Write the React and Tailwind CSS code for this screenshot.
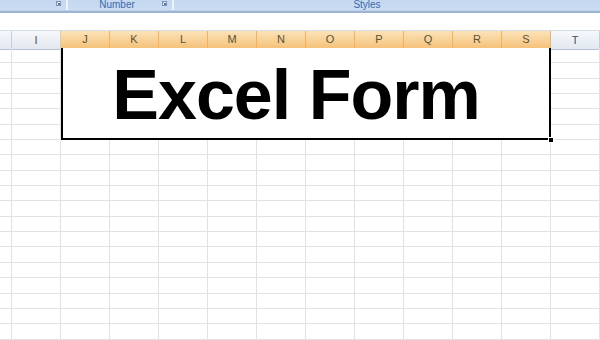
import React from "react";

const COLS = ["", "I", "J", "K", "L", "M", "N", "O", "P", "Q", "R", "S", "T"];
const SELECTED = ["J", "K", "L", "M", "N", "O", "P", "Q", "R", "S"];
const ROWS = 19;

function Launcher() {
  return (
    <svg width="5" height="5" viewBox="0 0 5 5" className="shrink-0">
      <rect x="0.5" y="0.5" width="4" height="4" fill="#e9f0f9" stroke="#7d95b8" strokeWidth="1" />
      <path d="M1.5 1.5 L3.5 3.5 M3.5 2 V3.5 H2" stroke="#3a5a8a" strokeWidth="0.8" fill="none" />
    </svg>
  );
}

export default function App() {
  return (
    <div className="w-[600px] h-[340px] overflow-hidden bg-white flex flex-col" style={{ fontFamily: '"Liberation Sans", Arial, sans-serif' }}>
      {/* ribbon bottom edge */}
      <div className="h-[10px] flex bg-[#dbe6f4]">
        <div className="w-[66px] flex justify-end items-start pt-[1px] pr-[5px] bg-gradient-to-b from-[#c4d8f0] to-[#c9dcf2] rounded-br-[2px]">
          <Launcher />
        </div>
        <div className="w-[2px] bg-[#eef3fa]" />
        <div className="w-[104px] flex items-center bg-gradient-to-b from-[#c4d8f0] to-[#c9dcf2] rounded-b-[2px]">
          <span className="flex-1 text-center text-[10px] leading-none text-[#3f68a8] pl-[4px]">Number</span>
          <div className="pr-[5px] self-start pt-[1px]"><Launcher /></div>
        </div>
        <div className="w-[2px] bg-[#eef3fa]" />
        <div className="flex-1 flex items-center justify-center bg-gradient-to-b from-[#c4d8f0] to-[#c9dcf2] rounded-bl-[2px]">
          <span className="text-[10px] leading-none text-[#3f68a8] mr-[40px]">Styles</span>
        </div>
      </div>
      <div className="h-[1px] bg-[#c0d2ea]" />
      <div className="h-[2px] bg-[#9db4d4]" />
      <div className="h-[17px] bg-white" />
      <div className="h-[1px] bg-[#d6dde7]" />

      {/* column headers */}
      <div className="grid grid-cols-[12px_repeat(12,49px)] h-[17px]">
        {COLS.map((c, i) => {
          const sel = SELECTED.includes(c);
          return (
            <div
              key={i}
              className={
                sel
                  ? "flex items-center justify-center text-[11px] text-[#5a5132] bg-gradient-to-b from-[#fbe3b8] to-[#f5c27a] border-r border-[#f2b15f] border-b-2 border-b-[#f29a3a]"
                  : "flex items-center justify-center text-[11px] text-[#4a4f58] bg-gradient-to-b from-[#f6f8fb] to-[#e2e8f0] border-r border-[#c5cedb] border-b border-b-[#b6c1d1]"
              }
            >
              {c}
            </div>
          );
        })}
      </div>

      {/* sheet */}
      <div className="flex-1 grid grid-cols-[12px_repeat(12,49px)] auto-rows-[15.35px]">
        {Array.from({ length: ROWS }).flatMap((_, r) =>
          COLS.map((c, i) => {
            if (r < 6 && i >= 2 && i <= 11) return null;
            return (
              <div
                key={r + "-" + i}
                className="border-r border-b border-[#e0e2e8]"
                style={{ gridRow: r + 1, gridColumn: i + 1 }}
              />
            );
          })
        )}
        <div className="col-start-3 col-end-13 row-start-1 row-end-7 border-x-2 border-b-2 border-black bg-white flex items-center justify-center pr-[20px] relative">
          <span className="text-[70px] font-bold leading-none tracking-[-1px] text-black mt-[4px]">Excel Form</span>
          <div className="absolute right-[-5px] bottom-[-5px] w-[6px] h-[6px] bg-black border border-white" />
        </div>
      </div>
    </div>
  );
}
